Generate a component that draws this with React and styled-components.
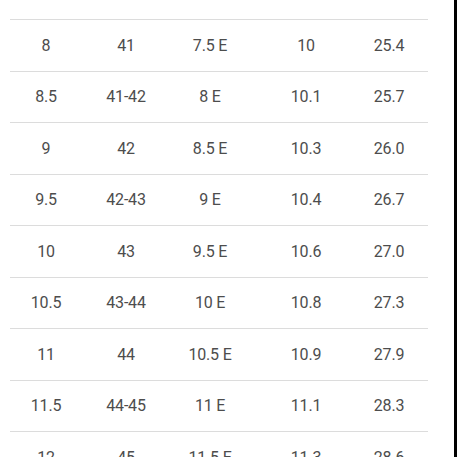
import React from "react";
import styled, { createGlobalStyle } from "styled-components";

const Global = createGlobalStyle`
  html, body { margin:0; padding:0; background:#fff; overflow:hidden; }
  body { font-family: Roboto, "Noto Sans", sans-serif; }
`;

const Page = styled.div`
  display:flex;
  width:457px; height:457px;
  overflow:hidden;
  background:#fff;
`;
const Sheet = styled.div`
  flex:0 0 454px;
  box-sizing:border-box;
  padding-left:10px;
  overflow:hidden;
`;
const Edge = styled.div`
  flex:0 0 3px;
  height:457px;
  background:#000;
`;
const Table = styled.div`
  width:418px;
  margin-top:-31.5px;
`;
const Row = styled.div`
  display:grid;
  grid-template-columns: 72px 88px 80px 112px 54px 1fr;
  align-items:center;
  height:50.5px;
  border-top:${p => (p.first ? "none" : "1px solid #dcdcdc")};
`;
const Cell = styled.div`
  text-align:center;
  font-size:16px;
  color:#4d4d4d;
  letter-spacing:-0.2px;
`;

const rows = [
  ["7.5", "40-41", "7 E", "9.8", "25.1"],
  ["8", "41", "7.5 E", "10", "25.4"],
  ["8.5", "41-42", "8 E", "10.1", "25.7"],
  ["9", "42", "8.5 E", "10.3", "26.0"],
  ["9.5", "42-43", "9 E", "10.4", "26.7"],
  ["10", "43", "9.5 E", "10.6", "27.0"],
  ["10.5", "43-44", "10 E", "10.8", "27.3"],
  ["11", "44", "10.5 E", "10.9", "27.9"],
  ["11.5", "44-45", "11 E", "11.1", "28.3"],
  ["12", "45", "11.5 E", "11.3", "28.6"],
];

export default function App() {
  return (
    <Page>
      <Global />
      <Sheet>
        <Table>
          {rows.map((r, i) => (
            <Row key={i} first={i === 0}>
              {r.map((c, j) => (
                <Cell key={j}>{c}</Cell>
              ))}
            </Row>
          ))}
        </Table>
      </Sheet>
      <Edge />
    </Page>
  );
}
